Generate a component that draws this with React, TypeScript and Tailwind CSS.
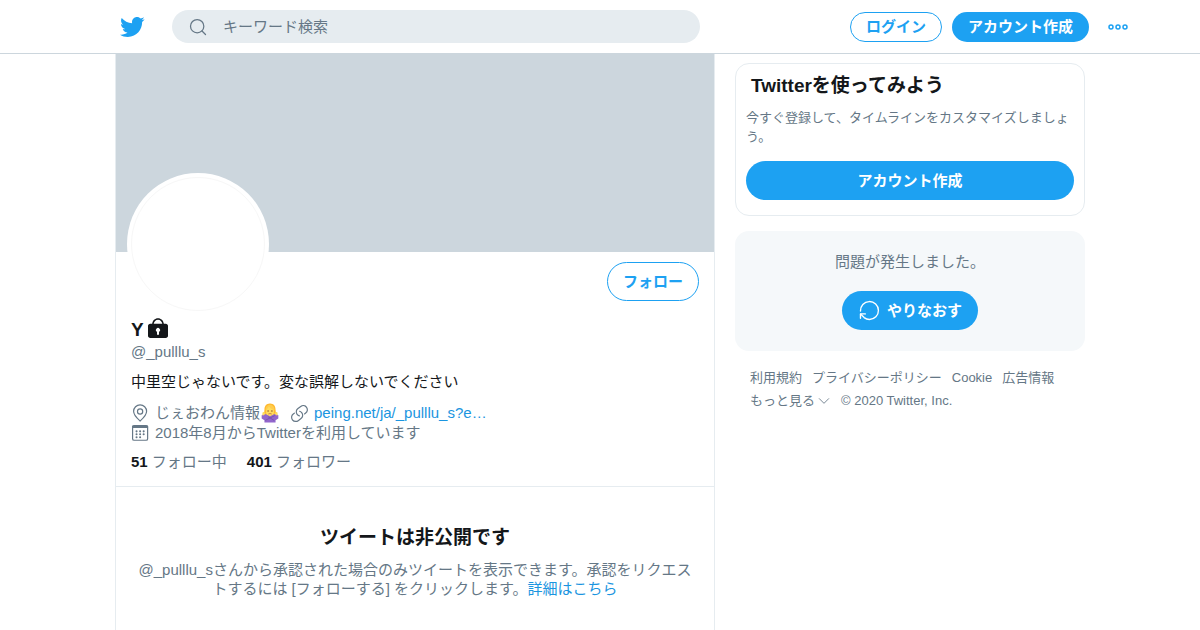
import type { ReactNode } from "react";

const BIRD =
  "M23.643 4.937c-.835.37-1.732.62-2.675.733.962-.576 1.7-1.49 2.048-2.578-.9.534-1.897.922-2.958 1.13-.85-.904-2.06-1.47-3.4-1.47-2.572 0-4.658 2.086-4.658 4.66 0 .364.042.718.12 1.06-3.873-.195-7.304-2.05-9.602-4.868-.4.69-.63 1.49-.63 2.342 0 1.616.823 3.043 2.072 3.878-.764-.025-1.482-.234-2.11-.583v.06c0 2.257 1.605 4.14 3.737 4.568-.392.106-.803.162-1.227.162-.3 0-.593-.028-.877-.082.593 1.85 2.313 3.198 4.352 3.234-1.595 1.25-3.604 1.995-5.786 1.995-.376 0-.747-.022-1.112-.065 2.062 1.323 4.51 2.093 7.14 2.093 8.57 0 13.255-7.098 13.255-13.254 0-.2-.005-.402-.014-.602.91-.658 1.7-1.477 2.323-2.41z";

function StrokeIcon({ className, children }: { className: string; children: ReactNode }) {
  return (
    <svg
      viewBox="0 0 24 24"
      aria-hidden="true"
      className={className}
      fill="none"
      stroke="currentColor"
      strokeWidth="1.5"
      strokeLinecap="round"
      strokeLinejoin="round"
    >
      {children}
    </svg>
  );
}

function LockIcon() {
  return (
    <svg viewBox="0 0 24 24" role="img" aria-label="非公開アカウント" className="size-6 shrink-0">
      <path
        fill="currentColor"
        fillRule="evenodd"
        d="M19.75 5.8h-1.88C17.4 2.4 15.1.2 12 .2S6.6 2.4 6.13 5.8H4.25C3 5.8 2 6.8 2 8.050v9.700C2 19 3 20 4.250 20h15.500C21 20 22 19 22 17.750v-9.700C22 6.800 21 5.800 19.750 5.800zM12 1.700c2.300 0 3.900 1.700 4.300 4.100H7.700c.4-2.400 2-4.100 4.300-4.100zm1 12v2.300a1 1 0 0 1-2 0v-2.300a2 2 0 1 1 2 0z"
      />
    </svg>
  );
}

function NoGestureEmoji() {
  return (
    <svg viewBox="0 0 36 36" role="img" aria-label="腕でバツを作る女性" className="size-5 shrink-0">
      <path fill="#FFB92E" d="M18 1C11 1 8 6 8 12c0 5-2 8-2 13h24c0-5-2-8-2-13 0-6-3-11-10-11z" />
      <path fill="#FFDC5D" d="M11 12c0-4 3-7 7-7s7 3 7 7v5c0 4-3 7-7 7s-7-3-7-7z" />
      <path fill="#FFCC4D" d="M10 13c2-1 5-4 6-7 3 4 6 6 10 7 0-6-3-10-8-10s-8 4-8 10z" />
      <path fill="#662113" d="M14.500 13q1 0 1 1.300t-1 1.300-1-1.300 1-1.300zm7 0q1 0 1 1.300t-1 1.300-1-1.300 1-1.300z" />
      <path fill="none" stroke="#C1694F" strokeWidth="1.400" strokeLinecap="round" d="M15.500 19.500q2.500-1.500 5 0" />
      <path fill="#9266CC" d="M3 22l5-3 10 5 10-5 5 3v6l-5 3v4H8v-4l-5-3z" />
      <path fill="none" stroke="#7450A8" strokeWidth="1.500" strokeLinecap="round" d="M10 31l16-8M15 25l10 6" />
      <path fill="#FFDC5D" d="M5 23c-1-3-1-7 1-7s4 2 4 4zm26 0c1-3 1-7-1-7s-4 2-4 4z" />
    </svg>
  );
}

const footerLinks = ["利用規約", "プライバシーポリシー", "Cookie", "広告情報"];

export default function App() {
  return (
    <div className="flex min-h-screen flex-col bg-white font-['Liberation_Sans','Noto_Sans_CJK_JP',sans-serif] text-[15px] leading-5 text-[#14171a]">
      <header className="border-b border-[#ccd6dd]">
        <div className="mx-auto flex h-[53px] max-w-[1072px] items-center pl-[55px]">
          <a href="#home" aria-label="Twitter" className="text-[#1da1f2]">
            <svg viewBox="0 0 24 24" aria-hidden="true" className="size-[26px]" fill="currentColor">
              <path d={BIRD} />
            </svg>
          </a>
          <label className="ml-[27px] flex h-[33px] w-[528px] items-center gap-[15px] rounded-full bg-[#e6ecf0] px-4 text-[#657786]">
            <StrokeIcon className="size-5 shrink-0">
              <circle cx="11" cy="11" r="8" />
              <path d="M16.800 16.800 21 21" />
            </StrokeIcon>
            <input
              type="search"
              aria-label="キーワード検索"
              placeholder="キーワード検索"
              className="min-w-0 flex-1 bg-transparent outline-none placeholder:text-[#657786]"
            />
          </label>
          <div className="ml-auto flex items-center gap-[10px] font-bold">
            <button type="button" className="h-[30px] rounded-full border border-[#1da1f2] px-[15px] text-[#1da1f2]">
              ログイン
            </button>
            <button type="button" className="h-[30px] rounded-full bg-[#1da1f2] px-4 text-white">
              アカウント作成
            </button>
            <button type="button" aria-label="もっと見る" className="pr-[6px] pl-[7px] text-[#1da1f2]">
              <svg viewBox="0 0 24 24" aria-hidden="true" className="size-6" fill="none" stroke="currentColor" strokeWidth="1.500">
                <circle cx="5" cy="12" r="2" />
                <circle cx="12" cy="12" r="2" />
                <circle cx="19" cy="12" r="2" />
              </svg>
            </button>
          </div>
        </div>
      </header>

      <div className="mx-auto flex w-full max-w-[970px] flex-1 gap-5">
        <main className="min-w-0 flex-1 border-x border-[#e6ecf0]">
          <div className="h-[198px] bg-[#ccd6dd]" />
          <section className="border-b border-[#e6ecf0] px-[15px] pt-[10px] pb-[14px]">
            <div className="flex h-[55px] items-start justify-between">
              <div className="-mt-[89px] -ml-1 size-[142px] rounded-full bg-white p-1">
                <div className="size-full rounded-full border border-[#f7f7f7]" />
              </div>
              <button type="button" className="h-[39px] rounded-full border border-[#1da1f2] px-[15px] font-bold text-[#1da1f2]">
                フォロー
              </button>
            </div>
            <h1 className="flex h-[25px] items-center gap-[2px] text-[19px] font-bold">
              Y
              <LockIcon />
            </h1>
            <p className="text-[#657786]">@_pulllu_s</p>
            <p className="mt-[10px]">中里空じゃないです。変な誤解しないでください</p>
            <div className="mt-[11px] text-[#657786]">
              <div className="flex items-center gap-[10px]">
                <span className="flex items-center">
                  <StrokeIcon className="mr-[5px] size-[19px]">
                    <path d="M11.500 21.500c-2.500-2.200-8.200-6.800-8.200-12.200a8.200 8.200 0 0 1 16.400 0c0 5.400-5.700 10-8.200 12.200z" />
                    <circle cx="11.500" cy="9.500" r="3.300" />
                  </StrokeIcon>
                  じぇおわん情報
                  <NoGestureEmoji />
                </span>
                <span className="flex items-center">
                  <StrokeIcon className="mr-[5px] size-[19px]">
                    <path d="M11.960 14.945c-.067 0-.136-.01-.203-.027-1.130-.318-2.097-.986-2.795-1.932-.832-1.125-1.176-2.508-.968-3.893s.942-2.605 2.068-3.438l3.530-2.608c2.322-1.716 5.610-1.224 7.330 1.100.83 1.127 1.175 2.510.967 3.895s-.943 2.605-2.070 3.438l-1.480 1.094" />
                    <path d="M7.270 22.054c-1.610 0-3.197-.735-4.225-2.125-.832-1.127-1.176-2.510-.968-3.894s.943-2.605 2.070-3.438l1.478-1.094M7.270 22.054c1.100 0 2.180-.34 3.100-1.020l3.530-2.608c1.126-.833 1.860-2.054 2.068-3.438s-.136-2.768-.968-3.894c-.698-.946-1.665-1.614-2.795-1.932" />
                  </StrokeIcon>
                  <a href="#website" className="text-[#1b95e0]">
                    peing.net/ja/_pulllu_s?e…
                  </a>
                </span>
              </div>
              <div className="flex items-center">
                <StrokeIcon className="mr-[5px] size-[19px]">
                  <rect x="2" y="2" width="19" height="18.500" rx="2" />
                  <path d="M2.800 3.500h17.400" strokeWidth="3.200" />
                  <path
                    d="M7 9.300h.01M11.500 9.300h.01M16 9.300h.01M7 13h.01M11.500 13h.01M16 13h.01M7 16.700h.01M11.500 16.700h.01"
                    strokeWidth="2.600"
                  />
                </StrokeIcon>
                2018年8月からTwitterを利用しています
              </div>
            </div>
            <div className="mt-[9px] flex gap-5 text-[#657786]">
              <a href="#following">
                <strong className="text-[#14171a]">51</strong> フォロー中
              </a>
              <a href="#followers">
                <strong className="text-[#14171a]">401</strong> フォロワー
              </a>
            </div>
          </section>
          <section className="px-5 pt-[39px] text-center">
            <h2 className="text-[19px] leading-6 font-bold">ツイートは非公開です</h2>
            <p className="mt-[10px] leading-[19px] text-[#657786]">
              @_pulllu_sさんから承認された場合のみツイートを表示できます。承認をリクエストするには [フォローする] をクリックします。
              <a href="#help" className="text-[#1b95e0]">
                詳細はこちら
              </a>
            </p>
          </section>
        </main>

        <aside className="w-[350px] shrink-0 pt-[9px]">
          <section className="rounded-[14px] border border-[#e6ecf0] px-[10px] pt-[10px] pb-[15px]">
            <h2 className="px-[5px] text-[19px] leading-6 font-bold">Twitterを使ってみよう</h2>
            <p className="mt-[10px] text-[13px] leading-[19px] text-[#657786]">
              今すぐ登録して、タイムラインをカスタマイズしましょう。
            </p>
            <button type="button" className="mt-[15px] h-[39px] w-full rounded-full bg-[#1da1f2] font-bold text-white">
              アカウント作成
            </button>
          </section>
          <section className="mt-[15px] flex flex-col items-center rounded-[14px] bg-[#f5f8fa] pt-[21px] pb-[21px]">
            <p className="text-[#657786]">問題が発生しました。</p>
            <button
              type="button"
              className="mt-[19px] flex h-[39px] items-center gap-[7px] rounded-full bg-[#1da1f2] px-4 font-bold text-white"
            >
              <StrokeIcon className="size-[22px]">
                <path d="M2.700 12A9.800 9.800 0 1 1 12.500 21.300c-2 0-4.200-.8-5.800-2.100L2.800 15.400" />
                <path d="M2.700 20v-4.800h5.300" />
              </StrokeIcon>
              やりなおす
            </button>
          </section>
          <footer className="mt-[17px] flex flex-wrap gap-x-[10px] gap-y-[3px] px-[15px] text-[13px] text-[#657786]">
            {footerLinks.map((label) => (
              <a key={label} href="#footer">
                {label}
              </a>
            ))}
            <button type="button" className="flex items-center gap-[2px]">
              もっと見る
              <StrokeIcon className="size-[14px]">
                <path d="m4 8 8 8 8-8" />
              </StrokeIcon>
            </button>
            <span>© 2020 Twitter, Inc.</span>
          </footer>
        </aside>
      </div>
    </div>
  );
}
